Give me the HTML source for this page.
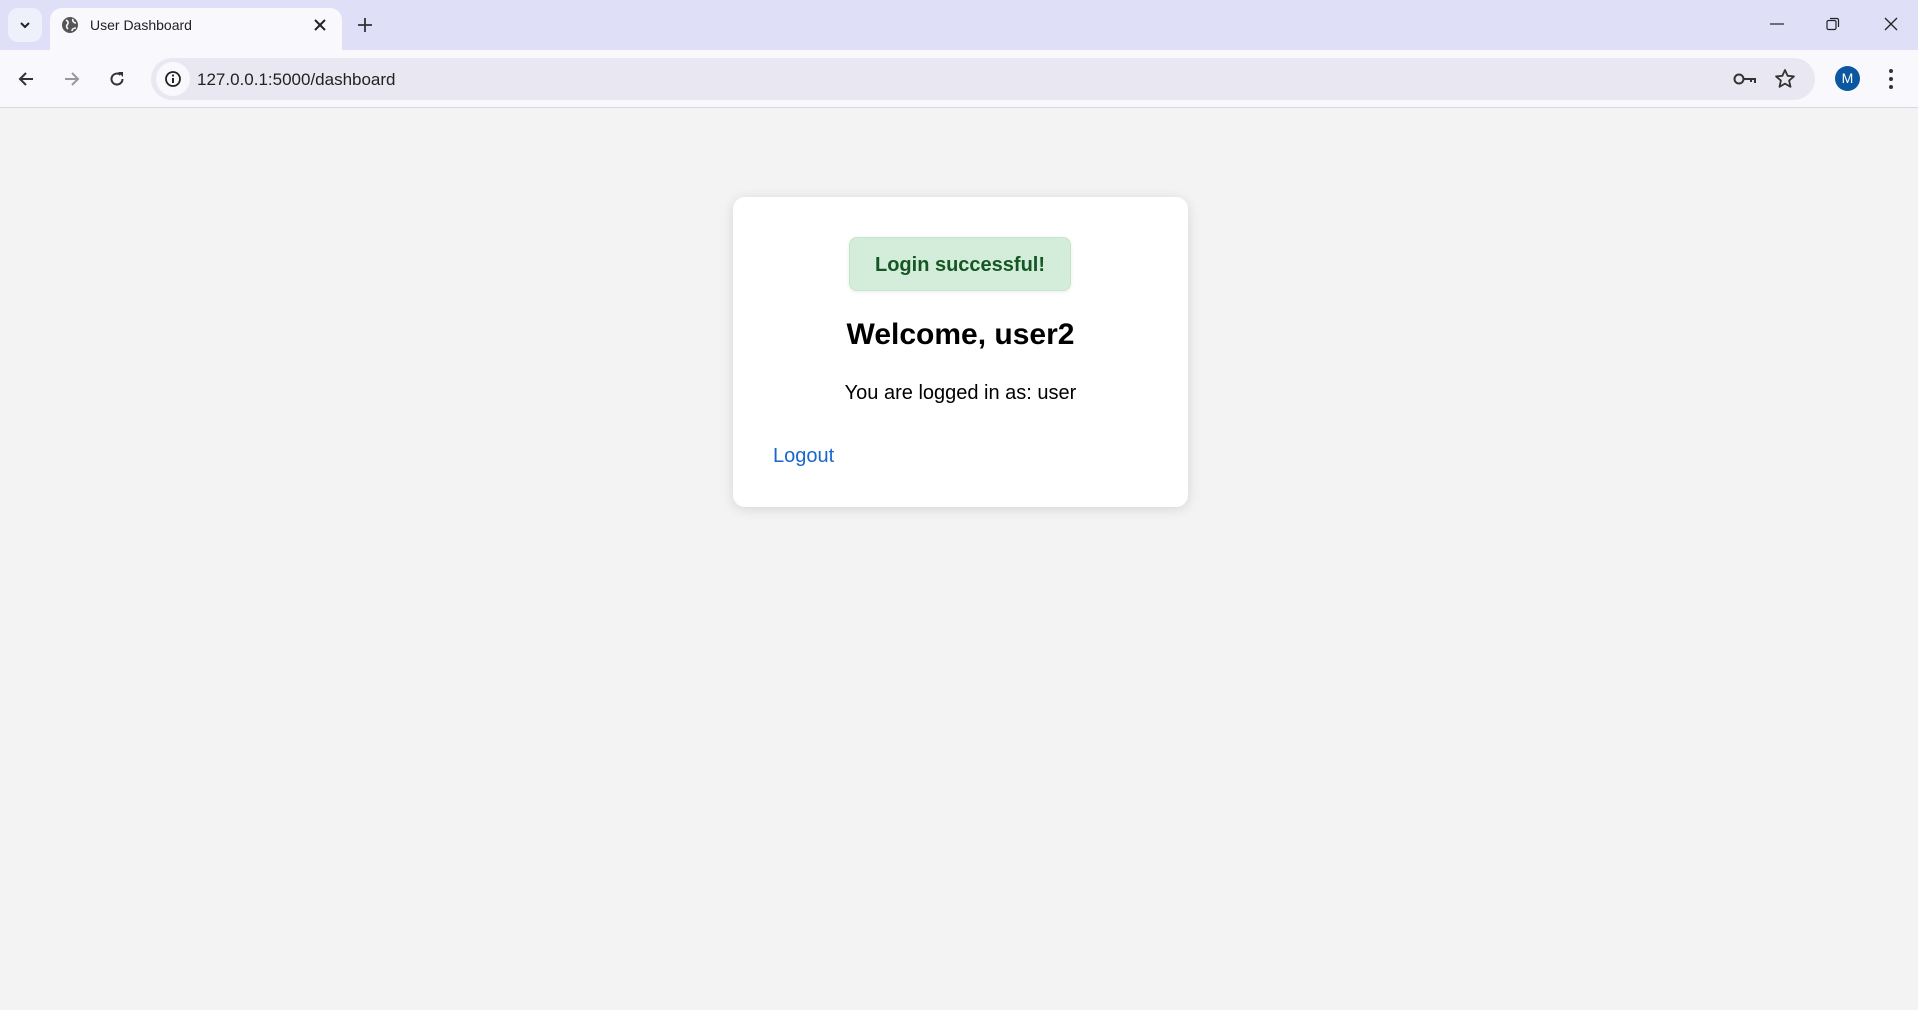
<!DOCTYPE html>
<html><head><meta charset="utf-8"><style>
*{margin:0;padding:0;box-sizing:border-box}
body{width:1918px;height:1010px;background:#f3f3f3;font-family:"Liberation Sans",Arial,sans-serif;position:relative;overflow:hidden}
.tabs{position:absolute;left:0;top:0;width:1918px;height:50px;background:#dfe0f8}
.toolbar{position:absolute;left:0;top:50px;width:1918px;height:58px;background:#f8f8fd;border-bottom:1px solid #d6d6e0}
.tab{position:absolute;left:50px;top:8px;width:292px;height:44px;background:#f8f8fd;border-radius:12px 12px 0 0}
.tabtitle{position:absolute;left:90px;top:17px;font-size:14px;color:#222}
.omni{position:absolute;left:151px;top:58px;width:1664px;height:42px;border-radius:21px;background:#e9e8f2}
.url{position:absolute;left:197px;top:70px;font-size:17px;color:#222}
.card{position:absolute;left:733px;top:197px;width:455px;height:310px;background:#fff;border-radius:12px;box-shadow:0 2px 12px rgba(0,0,0,.12)}
.flash{position:absolute;left:116px;top:40px;width:222px;height:54px;background:#d4edda;border:1px solid #c3e6cb;border-radius:8px;color:#155724;font-weight:bold;font-size:20px;text-align:center;line-height:54px;box-shadow:0 1px 4px rgba(0,0,0,.08)}
h2{position:absolute;left:0;width:455px;top:121px;text-align:center;font-size:30px;font-weight:bold;color:#000}
.p{position:absolute;left:0;width:455px;top:185px;text-align:center;font-size:20px;color:#000}
.a{position:absolute;left:40px;top:248px;font-size:20px;color:#1a66cc}
svg{position:absolute}
</style></head><body>
<div class="tabs"></div>
<div style="position:absolute;left:8px;top:8px;width:34px;height:34px;border-radius:10px;background:#eef0fb"></div>
<svg style="left:17px;top:18px" width="16" height="14"><path d="M4 5l4 4 4-4" stroke="#222" stroke-width="2" fill="none"/></svg>
<div class="tab"></div>
<svg style="left:61px;top:16px" width="18" height="18"><circle cx="9" cy="9" r="8" fill="#555"/><path d="M5 4c2 1 3 3 1 5-1 1 0 3 1 4M12 3c-1 2 1 4 3 4M11 15c0-2 2-3 4-3" stroke="#f8f8fd" stroke-width="1.6" fill="none"/></svg>
<div class="tabtitle">User Dashboard</div>
<svg style="left:313px;top:18px" width="14" height="14"><path d="M2 2l10 10M12 2L2 12" stroke="#222" stroke-width="2"/></svg>
<svg style="left:357px;top:17px" width="16" height="16"><path d="M8 1v14M1 8h14" stroke="#333" stroke-width="1.8"/></svg>
<svg style="left:1770px;top:23px" width="14" height="2"><path d="M0 1h14" stroke="#222" stroke-width="1.2"/></svg>
<svg style="left:1826px;top:17px" width="14" height="14"><rect x="1" y="3.5" width="9" height="9" rx="1.5" stroke="#222" fill="none" stroke-width="1.2"/><path d="M4 1.5h7a1.5 1.5 0 0 1 1.5 1.5v7" stroke="#222" fill="none" stroke-width="1.2"/></svg>
<svg style="left:1884px;top:17px" width="14" height="14"><path d="M1 1l12 12M13 1L1 13" stroke="#222" stroke-width="1.3"/></svg>
<div class="toolbar"></div>
<svg style="left:17px;top:70px" width="18" height="18"><path d="M16 9H3M9 3L3 9l6 6" stroke="#333" stroke-width="2" fill="none"/></svg>
<svg style="left:63px;top:70px" width="18" height="18"><path d="M2 9h13M9 3l6 6-6 6" stroke="#999" stroke-width="2" fill="none"/></svg>
<svg style="left:108px;top:70px" width="18" height="18"><path d="M14.5 9A5.5 5.5 0 1 1 12.5 4.8" stroke="#333" stroke-width="2" fill="none"/><path d="M10 2h5v5z" fill="#333"/></svg>
<div class="omni"></div>
<div style="position:absolute;left:156px;top:62px;width:34px;height:34px;border-radius:17px;background:#f8f8fd"></div>
<svg style="left:164px;top:70px" width="18" height="18"><circle cx="9" cy="9" r="7" stroke="#222" stroke-width="1.8" fill="none"/><path d="M9 8v5" stroke="#222" stroke-width="2"/><circle cx="9" cy="5.5" r="1.1" fill="#222"/></svg>
<div class="url">127.0.0.1:5000/dashboard</div>
<svg style="left:1733px;top:71px" width="24" height="16"><circle cx="6" cy="8" r="4.5" stroke="#333" stroke-width="2" fill="none"/><path d="M10.5 8H22v4M18 8v3" stroke="#333" stroke-width="2" fill="none"/></svg>
<svg style="left:1774px;top:68px" width="22" height="22"><path d="M11 2l2.6 5.8 6.3.6-4.8 4.2 1.4 6.2L11 15.6 5.5 18.8l1.4-6.2L2.1 8.4l6.3-.6z" stroke="#333" stroke-width="1.8" fill="none" stroke-linejoin="round"/></svg>
<div style="position:absolute;left:1835px;top:66px;width:25px;height:25px;border-radius:50%;background:#0b57a0;color:#fff;font-size:14px;text-align:center;line-height:25px">M</div>
<svg style="left:1888px;top:68px" width="6" height="22"><circle cx="3" cy="3" r="2" fill="#333"/><circle cx="3" cy="11" r="2" fill="#333"/><circle cx="3" cy="19" r="2" fill="#333"/></svg>
<div class="card">
<div class="flash">Login successful!</div>
<h2>Welcome, user2</h2>
<div class="p">You are logged in as: user</div>
<div class="a">Logout</div>
</div>
</body></html>
